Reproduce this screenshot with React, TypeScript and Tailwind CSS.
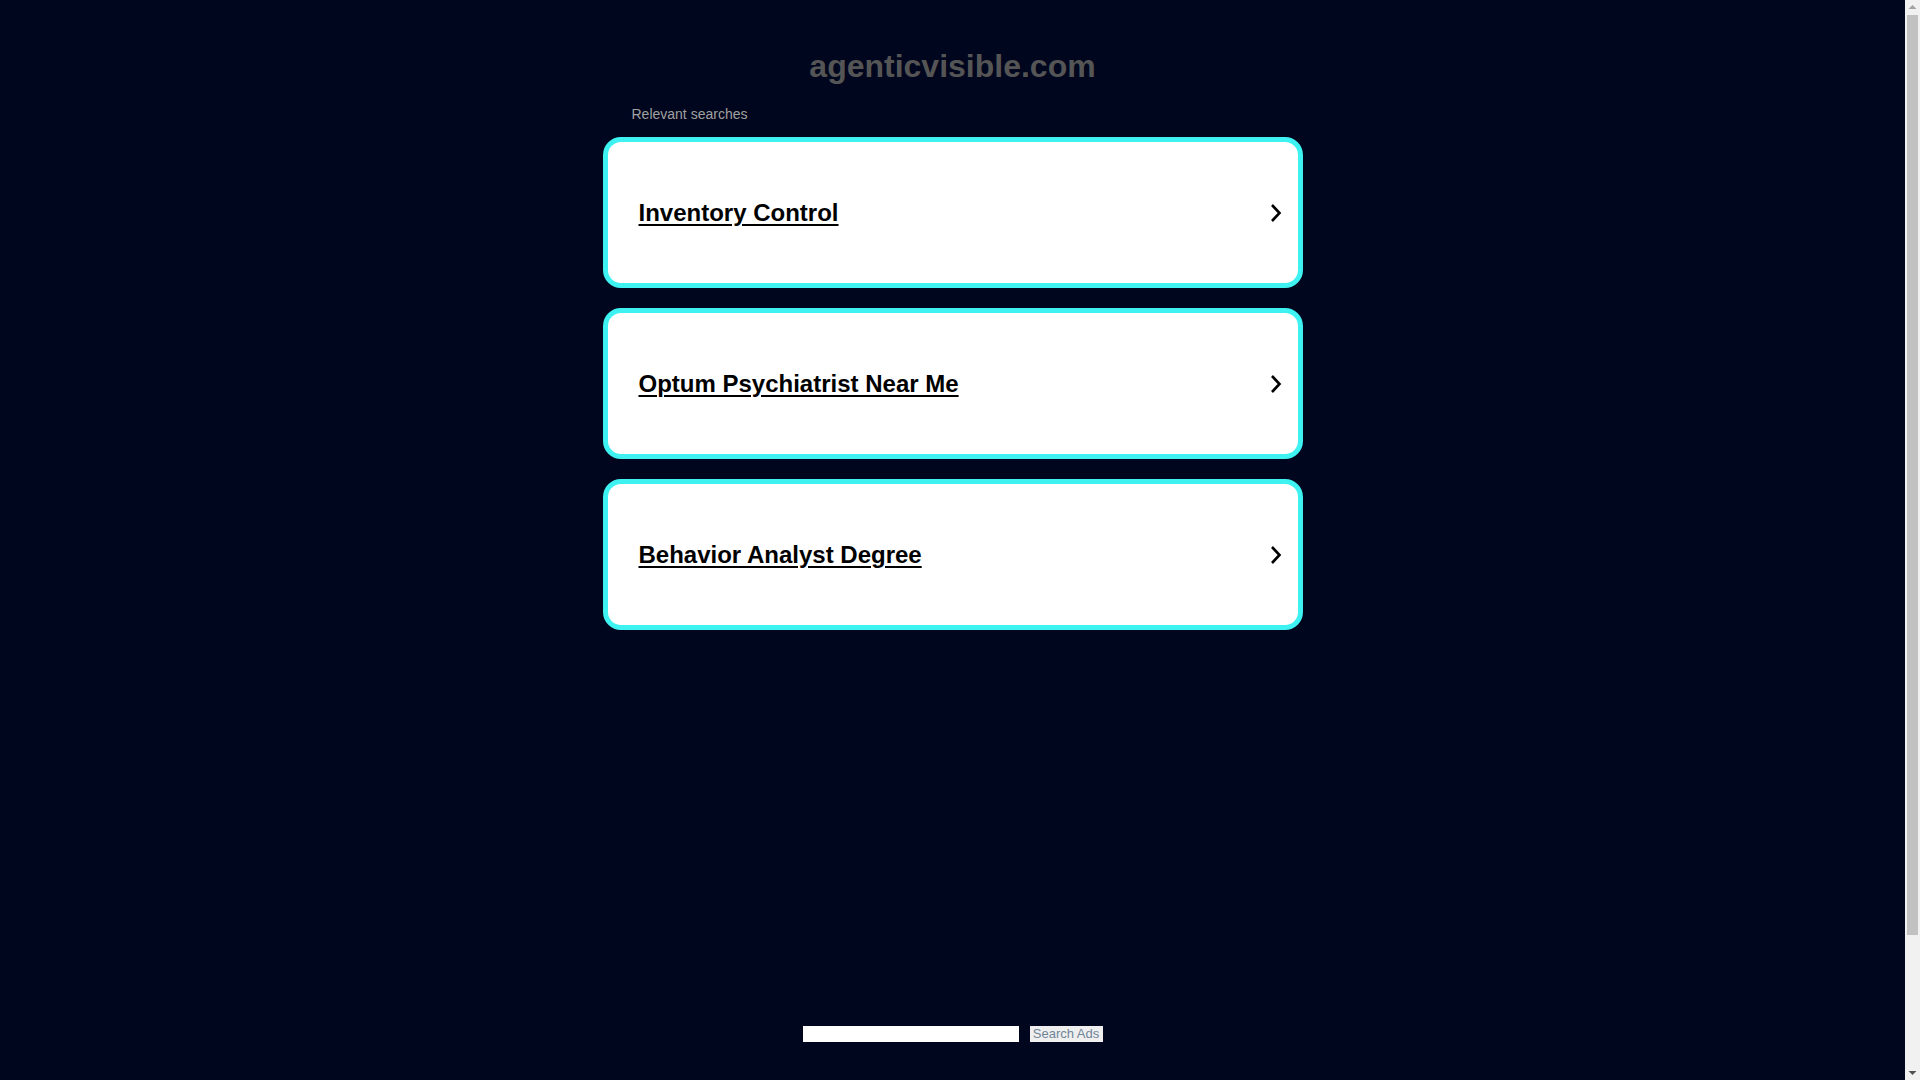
import React from 'react';

const searches = ['Inventory Control', 'Optum Psychiatrist Near Me', 'Behavior Analyst Degree'];

function Chevron() {
  return (
    <svg width="14" height="22" viewBox="0 0 14 22" className="shrink-0">
      <polyline points="3,3 10.5,11 3,19" fill="none" stroke="#000" strokeWidth="2.6" />
    </svg>
  );
}

function SearchCard({ label }: { label: string }) {
  return (
    <a
      href="#"
      className="flex items-center justify-between h-[151px] bg-white border-[5px] border-[#3ef2f2] rounded-[18px] pl-[31px] pr-[15px]"
    >
      <span className="text-[24px] leading-[28px] font-bold text-black underline underline-offset-[3px] decoration-[2px]">
        {label}
      </span>
      <Chevron />
    </a>
  );
}

function Scrollbar() {
  return (
    <div className="w-[15px] h-full bg-[#f1f1f1] flex flex-col items-center shrink-0">
      <svg width="9" height="15" viewBox="0 0 9 15" className="shrink-0">
        <polygon points="0.5,9 4.5,5 8.5,9" fill="#a3a3a3" />
      </svg>
      <div className="w-[11px] h-[920px] bg-[#c1c1c1]" />
      <div className="flex-1" />
      <svg width="9" height="15" viewBox="0 0 9 15" className="shrink-0">
        <polygon points="0.5,6 4.5,10 8.5,6" fill="#505050" />
      </svg>
    </div>
  );
}

export default function App() {
  return (
    <div className="h-screen flex overflow-hidden bg-[#00061e] font-['Liberation_Sans',Arial,sans-serif]">
      <div className="flex-1 h-[1233px]">
        <div className="w-[700px] mx-auto pt-[48px]">
          <h1 className="text-center text-[32px] leading-[37px] font-bold text-[#555555]">agenticvisible.com</h1>
          <p className="mt-[21px] pl-[29px] text-[14px] leading-[16px] text-[#a0a0a0]">Relevant searches</p>
          <div className="mt-[15px] flex flex-col gap-[20px]">
            {searches.map((s) => (
              <SearchCard key={s} label={s} />
            ))}
          </div>
        </div>
        <div className="mt-[396px] flex justify-center items-center gap-[11px]">
          <input type="text" className="w-[216px] h-[16px] bg-white border-0 outline-none" />
          <button className="w-[73px] h-[16px] bg-[#efefef] text-[13px] leading-[16px] text-[#6f8599] font-['Liberation_Sans',Arial,sans-serif]">
            Search Ads
          </button>
        </div>
      </div>
      <Scrollbar />
    </div>
  );
}
